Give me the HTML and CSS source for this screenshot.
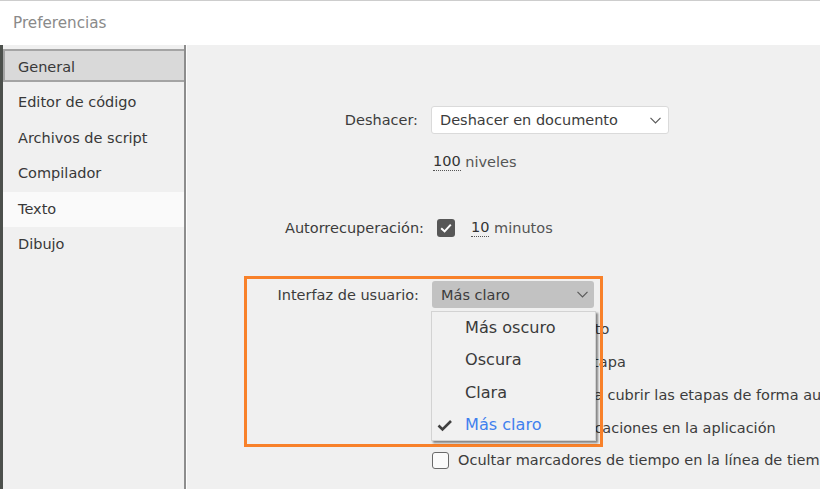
FILE: index.html
```html
<!DOCTYPE html>
<html lang="es">
<head>
    <meta charset="UTF-8" />
    <meta name="viewport" content="width=device-width, initial-scale=1.0"/>
    <title>Preferencias</title>
    <link rel="stylesheet" href="styles.css">
</head>
<body>

    <!-- Title bar -->
    <div class="titlebar">Preferencias</div>

    <div class="window">

        <!-- Categories -->
        <ul class="sidebar">
            <li class="cat selected">General</li>
            <li class="cat">Editor de código</li>
            <li class="cat">Archivos de script</li>
            <li class="cat">Compilador</li>
            <li class="cat hover">Texto</li>
            <li class="cat">Dibujo</li>
        </ul>

        <!-- General settings -->
        <div class="content">
            <div class="row row-undo">
                <span class="label">Deshacer:</span>
                <div class="select select-white">
                    <span>Deshacer en documento</span>
                    <svg class="chevron" width="11" height="7" viewBox="0 0 11 7"><polyline points="0.5,0.8 5.5,5.8 10.5,0.8" /></svg>
                </div>
            </div>

            <div class="row row-levels">
                <span class="label"></span>
                <span class="num">100</span>&nbsp;<span class="unit">niveles</span>
            </div>

            <div class="row row-auto">
                <span class="label">Autorrecuperación:</span>
                <span class="box checked">
                    <svg width="18" height="18" viewBox="0 0 18 18"><polyline points="4.2,9.2 7.6,12.4 13.8,5.6" /></svg>
                </span>
                <span class="num num-gap">10</span>&nbsp;<span class="unit">minutos</span>
            </div>

            <div class="row row-ui">
                <span class="label">Interfaz de usuario:</span>
                <div class="select select-gray">
                    <span>Más claro</span>
                    <svg class="chevron" width="11" height="7" viewBox="0 0 11 7"><polyline points="0.5,0.8 5.5,5.8 10.5,0.8" /></svg>

                    <!-- Open menu -->
                    <ul class="menu">
                        <li>Más oscuro</li>
                        <li>Oscura</li>
                        <li>Clara</li>
                        <li class="current">
                            <svg class="tick" width="16" height="13" viewBox="0 0 16 13"><polyline points="1.5,6.5 5.5,10.5 14,2" /></svg>
                            Más claro
                        </li>
                    </ul>
                </div>
            </div>

            <div class="row row-check first">
                <span class="label"></span>
                <span class="box"></span>
                <span class="text">Activar modo directo</span>
            </div>
            <div class="row row-check">
                <span class="label"></span>
                <span class="box"></span>
                <span class="text">Ajustar vista a la etapa</span>
            </div>
            <div class="row row-check">
                <span class="label"></span>
                <span class="box"></span>
                <span class="text">Ajustar escena para cubrir las etapas de forma automática</span>
            </div>
            <div class="row row-check">
                <span class="label"></span>
                <span class="box"></span>
                <span class="text">Mostrar unas notificaciones en la aplicación</span>
            </div>
            <div class="row row-check">
                <span class="label"></span>
                <span class="box"></span>
                <span class="text">Ocultar marcadores de tiempo en la línea de tiempo</span>
            </div>

            <!-- Highlight -->
            <div class="highlight"></div>
        </div>

    </div>

</body>
</html>
```

FILE: styles.css
```css
body {
    margin: 0;
    padding: 0;
    width: 820px;
    height: 489px;
    overflow: hidden;
    background: #f0f0f0;
    font-family: 'DejaVu Sans', Verdana, sans-serif;
    font-size: 14.5px;
    color: #3c3c3c;
}

.titlebar {
    height: 44px;
    line-height: 44px;
    border-top: 1px solid #cdcdcd;
    background: #fff;
    padding-left: 13px;
    font-size: 15.2px;
    color: #8a8a8a;
}

.window {
    display: flex;
    height: 444px;
    border-left: 3px solid #4c504c;
}

/* Sidebar */
.sidebar {
    list-style: none;
    margin: 0;
    padding: 4px 0 0 0;
    width: 181px;
    flex-shrink: 0;
    border-right: 2px solid #8d8d8d;
    box-sizing: content-box;
}

.cat {
    height: 35.5px;
    line-height: 35.5px;
    padding-left: 15px;
    color: #383838;
    white-space: nowrap;
}

.cat.selected {
    height: 33px;
    box-sizing: border-box;
    border: 2px solid #a4a4a4;
    border-right: none;
    background: #d9d9d9;
    padding-left: 13px;
    margin-bottom: 3px;
    line-height: 33px;
}

.cat.hover {
    background: #fafafa;
}

/* Content */
.content {
    flex: 1;
    min-width: 0;
    position: relative;
    overflow: hidden;
    border-left: 1px solid #fdfdfd;
    padding-top: 61px;
    white-space: nowrap;
}

.row {
    display: flex;
    align-items: center;
}

.label {
    width: 231px;
    margin-right: 13px;
    text-align: right;
    flex-shrink: 0;
}

.row-undo { height: 28px; }
.row-levels { height: 20px; margin-top: 18px; padding-left: 2px; }
.row-auto { height: 20px; margin-top: 46px; padding-left: 6px; }
.row-ui { height: 27px; margin-top: 43px; padding-left: 1px; }
.row-check { height: 32.75px; padding-left: 1px; }
.row-check.first { margin-top: 5px; }

.num {
    color: #333;
    border-bottom: 1px dotted #555;
    line-height: 17px;
}

.num-gap { margin-left: 16px; }

.unit { color: #555; }

/* Selects */
.select {
    display: flex;
    align-items: center;
    justify-content: space-between;
    box-sizing: border-box;
    border-radius: 3px;
    padding-left: 9px;
    flex-shrink: 0;
}

.select-white {
    width: 238px;
    height: 28px;
    background: #fff;
    border: 1px solid #dadada;
    padding-left: 8px;
    padding-right: 7px;
}

.select-gray {
    position: relative;
    width: 162px;
    height: 27px;
    background: #c2c2c2;
    padding-right: 6px;
}

.chevron polyline {
    fill: none;
    stroke: #5a5a5a;
    stroke-width: 1.2;
}

/* Checkboxes */
.box {
    width: 17px;
    height: 17px;
    box-sizing: border-box;
    border: 1.5px solid #6a6a6a;
    border-radius: 3px;
    background: #fbfbfb;
    margin-right: 9px;
    flex-shrink: 0;
}

.box.checked {
    width: 18px;
    height: 18px;
    border: none;
    background: #575757;
    margin-right: 0;
}

.box.checked svg {
    display: block;
}

.box.checked polyline {
    fill: none;
    stroke: #fff;
    stroke-width: 2;
}

/* Open menu */
.menu {
    position: absolute;
    top: 30px;
    left: -1px;
    width: 165px;
    height: 130px;
    box-sizing: border-box;
    margin: 0;
    padding: 0;
    list-style: none;
    background: #f1f1f1;
    border: 1px solid #d3d3d3;
    box-shadow: 2px 2px 2px rgba(0, 0, 0, 0.45);
    z-index: 2;
}

.menu li {
    position: relative;
    height: 32.4px;
    line-height: 32.4px;
    padding-left: 33px;
    font-size: 16.1px;
    color: #3a3a3a;
}

.menu li.current {
    color: #3f80ee;
}

.tick {
    position: absolute;
    left: 5px;
    top: 10px;
}

.tick polyline {
    fill: none;
    stroke: #404040;
    stroke-width: 2.6;
}

/* Orange highlight frame */
.highlight {
    position: absolute;
    left: 57px;
    top: 231px;
    width: 359px;
    height: 171px;
    box-sizing: border-box;
    border: 3px solid #f8812a;
    z-index: 1;
}
```
